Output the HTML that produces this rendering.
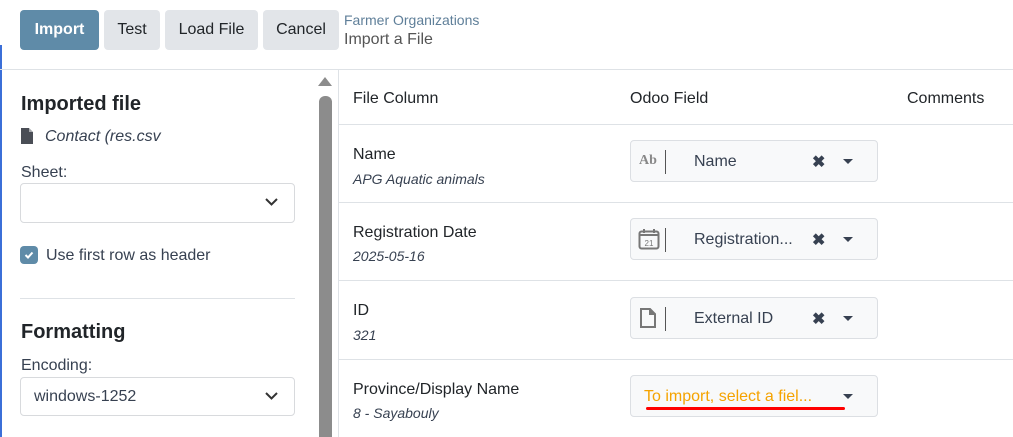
<!DOCTYPE html>
<html><head><meta charset="utf-8"><style>
*{box-sizing:border-box;margin:0;padding:0}
body{width:1013px;height:437px;overflow:hidden;background:#fff;font-family:"Liberation Sans",sans-serif;color:#374151;position:relative;font-size:15px}
.a{position:absolute}
.btn{position:absolute;top:10px;height:40px;border-radius:4px;background:#e2e5e9;color:#212529;font-size:16px;line-height:40px;text-align:center}
.sel{position:absolute;border:1px solid #d8dadd;border-radius:4px;background:#fff}
.fld{position:absolute;left:630px;width:248px;height:42px;border:1px solid #dcdfe3;border-radius:4px;background:#f8f9fa}
.fld .t{position:absolute;left:63px;top:12px;font-size:16px;color:#374151}
.fld .x{position:absolute;left:181px;top:11px;font-size:16px;font-weight:bold;color:#374151}
.car{position:absolute;left:212px;top:18px;width:0;height:0;border-left:5px solid transparent;border-right:5px solid transparent;border-top:5px solid #374151}
.bar{position:absolute;left:34px;top:9px;width:1px;height:24px;background:#555}
.hr{position:absolute;left:339px;width:674px;height:1px;background:#dee2e6}
.n{font-size:16px;color:#212529}
.s{font-size:14px;font-style:italic;color:#374151}
</style></head><body>
<div class="a" style="left:0;top:45px;width:2px;height:392px;background:#3b6fd8"></div>
<div class="btn" style="left:20px;width:79px;background:#5f8ba8;color:#fff;font-weight:bold">Import</div>
<div class="btn" style="left:104px;width:56px">Test</div>
<div class="btn" style="left:165px;width:93px">Load File</div>
<div class="btn" style="left:263px;width:76px">Cancel</div>
<div class="a" style="left:344px;top:12px;font-size:14px;color:#5f7f99">Farmer Organizations</div>
<div class="a" style="left:344px;top:31px;font-size:16px;color:#555">Import a File</div>
<div class="a" style="left:0;top:69px;width:1013px;height:1px;background:#dee2e6"></div>
<div class="a" style="left:338px;top:70px;width:1px;height:367px;background:#dee2e6"></div>
<div class="a" style="left:318px;top:77px;width:0;height:0;border-left:7px solid transparent;border-right:7px solid transparent;border-bottom:9px solid #8c8c8c"></div>
<div class="a" style="left:319px;top:96px;width:13px;height:341px;background:#8c8c8c;border-radius:6px 6px 0 0"></div>
<div class="a" style="left:21px;top:93px;font-size:20px;color:#212529;font-weight:bold">Imported file</div>
<svg class="a" style="left:21px;top:128px" width="12" height="16" viewBox="0 0 12 16"><path d="M0 0h8l4 4v12H0z" fill="#4a4e56"/><path d="M8 0v4h4" fill="#fff" opacity=".5"/></svg>
<div class="a s" style="left:45px;top:128px;font-size:16px">Contact (res.csv</div>
<div class="a" style="left:21px;top:164px;font-size:16px">Sheet:</div>
<div class="sel" style="left:20px;top:183px;width:275px;height:40px"></div>
<svg class="a" style="left:265px;top:198px" width="13" height="9"><path d="M1 1l5.5 5.5L12 1" stroke="#333" stroke-width="2" fill="none"/></svg>
<div class="a" style="left:20px;top:246px;width:18px;height:18px;border-radius:4px;background:#5f8ba8"></div>
<svg class="a" style="left:24px;top:250px" width="10" height="10"><path d="M1.5 5l2.5 2.5L8.5 2.5" stroke="#fff" stroke-width="2" fill="none"/></svg>
<div class="a" style="left:46px;top:247px;font-size:16px">Use first row as header</div>
<div class="a" style="left:20px;top:298px;width:275px;height:1px;background:#dee2e6"></div>
<div class="a" style="left:21px;top:321px;font-size:20px;color:#212529;font-weight:bold">Formatting</div>
<div class="a" style="left:21px;top:357px;font-size:16px">Encoding:</div>
<div class="sel" style="left:20px;top:377px;width:275px;height:39px"></div>
<div class="a" style="left:34px;top:388px;font-size:16px">windows-1252</div>
<svg class="a" style="left:265px;top:392px" width="13" height="9"><path d="M1 1l5.5 5.5L12 1" stroke="#333" stroke-width="2" fill="none"/></svg>
<div class="a n" style="left:353px;top:90px">File Column</div>
<div class="a n" style="left:630px;top:90px">Odoo Field</div>
<div class="a n" style="left:907px;top:90px">Comments</div>
<div class="hr" style="top:124px"></div>
<div class="hr" style="top:202px"></div>
<div class="hr" style="top:280px"></div>
<div class="hr" style="top:359px"></div>
<div class="a n" style="left:353px;top:146px">Name</div>
<div class="a s" style="left:353px;top:171px">APG Aquatic animals</div>
<div class="a n" style="left:353px;top:224px">Registration Date</div>
<div class="a s" style="left:353px;top:248px">2025-05-16</div>
<div class="a n" style="left:353px;top:302px">ID</div>
<div class="a s" style="left:353px;top:327px">321</div>
<div class="a n" style="left:353px;top:381px">Province/Display Name</div>
<div class="a s" style="left:353px;top:405px">8 - Sayabouly</div>

<div class="fld" style="top:140px"><div class="a" style="left:8px;top:12px;font-family:'Liberation Serif',serif;font-weight:bold;font-size:14px;color:#888">Ab</div><div class="bar"></div><div class="t">Name</div><div class="x">✖</div><div class="car"></div></div>
<div class="fld" style="top:218px"><svg class="a" style="left:7px;top:9px" width="22" height="22" viewBox="0 0 22 22"><rect x="1.5" y="3.5" width="19" height="17" rx="2" fill="none" stroke="#777" stroke-width="2"/><path d="M1.5 7h19M6 1v4M16 1v4" stroke="#777" stroke-width="2"/><text x="11" y="18" font-size="8" text-anchor="middle" fill="#777" font-family="Liberation Sans">21</text></svg><div class="bar"></div><div class="t">Registration...</div><div class="x">✖</div><div class="car"></div></div>
<div class="fld" style="top:297px"><svg class="a" style="left:9px;top:10px" width="16" height="20" viewBox="0 0 16 20"><path d="M1 1h9l5 5v13H1z" fill="none" stroke="#777" stroke-width="2"/><path d="M10 1v5h5" fill="#777" stroke="#777" stroke-width="2"/></svg><div class="bar"></div><div class="t">External ID</div><div class="x">✖</div><div class="car"></div></div>
<div class="fld" style="top:375px"><div class="a" style="left:13px;top:12px;font-size:16px;color:#f5a300">To import, select a fiel...</div><div class="a" style="left:15px;top:31px;width:199px;height:3px;background:#f00;border-radius:2px"></div><div class="car"></div></div>
</body></html>
